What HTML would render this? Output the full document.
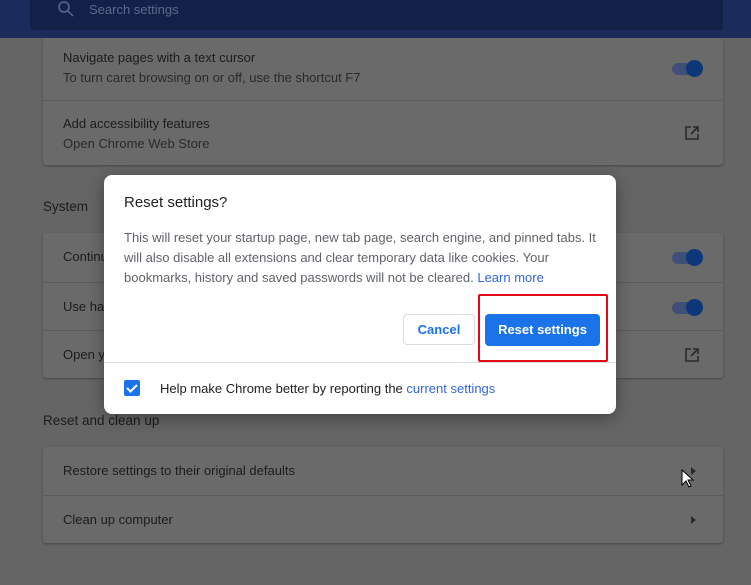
<!DOCTYPE html>
<html><head><style>
body{margin:0;width:751px;height:585px;overflow:hidden;background:#646564;font-family:"Liberation Sans",Arial,sans-serif;position:relative}
.hdr{position:absolute;left:0;top:0;width:751px;height:38px;background:#1b2c5c}
.search{position:absolute;left:30px;top:0;width:693px;height:30px;background:#132048;border-radius:0 0 3px 3px}
.search span{position:absolute;left:59px;top:2px;font-size:13px;color:#5a6a8e}
.card{position:absolute;left:43px;width:680px;background:#6a6a6a;border-radius:3px;box-shadow:0 1px 2px rgba(0,0,0,.3)}
.row{position:absolute;left:0;width:680px;border-top:1px solid #5c5c5c}
.t{position:absolute;left:20px;font-size:13px;color:#1c1c1c}
.s{position:absolute;left:20px;font-size:13px;color:#2a2a2a}
.lbl{position:absolute;left:43px;font-size:13.5px;color:#1c1c1c}
.tog{position:absolute;left:629px;width:31px;height:14px}
.tog i{position:absolute;left:0;top:2px;width:28px;height:12px;border-radius:6px;background:#3e5077}
.tog b{position:absolute;left:14px;top:-1px;width:17px;height:17px;border-radius:50%;background:#0d3778}
.arr{position:absolute;left:648px;width:0;height:0;border-left:5px solid #2a2a2a;border-top:4px solid transparent;border-bottom:4px solid transparent}
.dlg{position:absolute;left:104px;top:175px;width:512px;height:239px;background:#fff;border-radius:8px;box-shadow:0 4px 16px rgba(0,0,0,.35)}
</style></head><body>
<div class="hdr"><div class="search">
<svg style="position:absolute;left:27px;top:0" width="18" height="18" viewBox="0 0 18 18"><circle cx="7" cy="7" r="5" fill="none" stroke="#5a6a8e" stroke-width="1.5"/><path d="M11 11l5 5" stroke="#5a6a8e" stroke-width="1.5"/></svg>
<span>Search settings</span></div></div>

<div class="card" style="top:38px;height:127px">
<div class="t" style="top:12px">Navigate pages with a text cursor</div>
<div class="s" style="top:32px">To turn caret browsing on or off, use the shortcut F7</div>
<div class="tog" style="top:23px"><i></i><b></b></div>
<div class="row" style="top:62px;height:65px">
<div class="t" style="top:15px">Add accessibility features</div>
<div class="s" style="top:35px">Open Chrome Web Store</div>
<svg style="position:absolute;left:641px;top:24px" width="16" height="16" viewBox="0 0 16 16" fill="none" stroke="#2a2a2a" stroke-width="1.6"><path d="M7 2H2v12h12V9M9 2h5v5M14 2L7 9"/></svg>
</div></div>

<div class="lbl" style="top:199px">System</div>
<div class="card" style="top:233px;height:145px">
<div class="t" style="top:16px">Continue running background apps when Google Chrome is closed</div>
<div class="tog" style="top:17px"><i></i><b></b></div>
<div class="row" style="top:49px;height:48px"><div class="t" style="top:16px">Use hardware acceleration when available</div><div class="tog" style="top:17px"><i></i><b></b></div></div>
<div class="row" style="top:97px;height:48px"><div class="t" style="top:16px">Open your computer's proxy settings</div>
<svg style="position:absolute;left:641px;top:16px" width="16" height="16" viewBox="0 0 16 16" fill="none" stroke="#2a2a2a" stroke-width="1.6"><path d="M7 2H2v12h12V9M9 2h5v5M14 2L7 9"/></svg></div>
</div>

<div class="lbl" style="top:413px">Reset and clean up</div>
<div class="card" style="top:447px;height:96px">
<div class="t" style="top:16px">Restore settings to their original defaults</div>
<div class="arr" style="top:20px"></div>
<div class="row" style="top:48px;height:48px"><div class="t" style="top:16px">Clean up computer</div><div class="arr" style="top:20px"></div></div>
</div>

<svg style="position:absolute;left:681px;top:469px" width="14" height="20" viewBox="0 0 14 20"><path d="M1 1v15l4-4 3 6 2-1-3-6h5z" fill="#fff" stroke="#000" stroke-width="1"/></svg>

<div class="dlg">
<div style="position:absolute;left:20px;top:19px;font-size:15px;color:#202124">Reset settings?</div>
<div style="position:absolute;left:20px;top:53px;width:480px;font-size:13px;line-height:20px;color:#5f6368">This will reset your startup page, new tab page, search engine, and pinned tabs. It will also disable all extensions and clear temporary data like cookies. Your bookmarks, history and saved passwords will not be cleared. <span style="color:#3367d6">Learn more</span></div>
<div style="position:absolute;left:299px;top:139px;width:72px;height:31px;border:1px solid #dadce0;border-radius:4px;box-sizing:border-box;color:#1a73e8;font-size:13px;font-weight:bold;text-align:center;line-height:29px">Cancel</div>
<div style="position:absolute;left:381px;top:139px;width:115px;height:32px;background:#1a73e8;border-radius:4px;color:#fff;font-size:13px;font-weight:bold;text-align:center;line-height:32px">Reset settings</div>
<div style="position:absolute;left:0;top:187px;width:512px;border-top:1px solid #dadce0"></div>
<div style="position:absolute;left:20px;top:205px;width:16px;height:16px;background:#1a73e8;border-radius:2px">
<svg width="16" height="16" viewBox="0 0 16 16"><path d="M3 8l3.5 3.5L13 5" fill="none" stroke="#fff" stroke-width="2"/></svg></div>
<div style="position:absolute;left:56px;top:206px;font-size:13px;color:#202124">Help make Chrome better by reporting the <span style="color:#3367d6">current settings</span></div>
</div>
<div style="position:absolute;left:478px;top:294px;width:126px;height:64px;border:2px solid #e00914;border-radius:2px"></div>
</body></html>
